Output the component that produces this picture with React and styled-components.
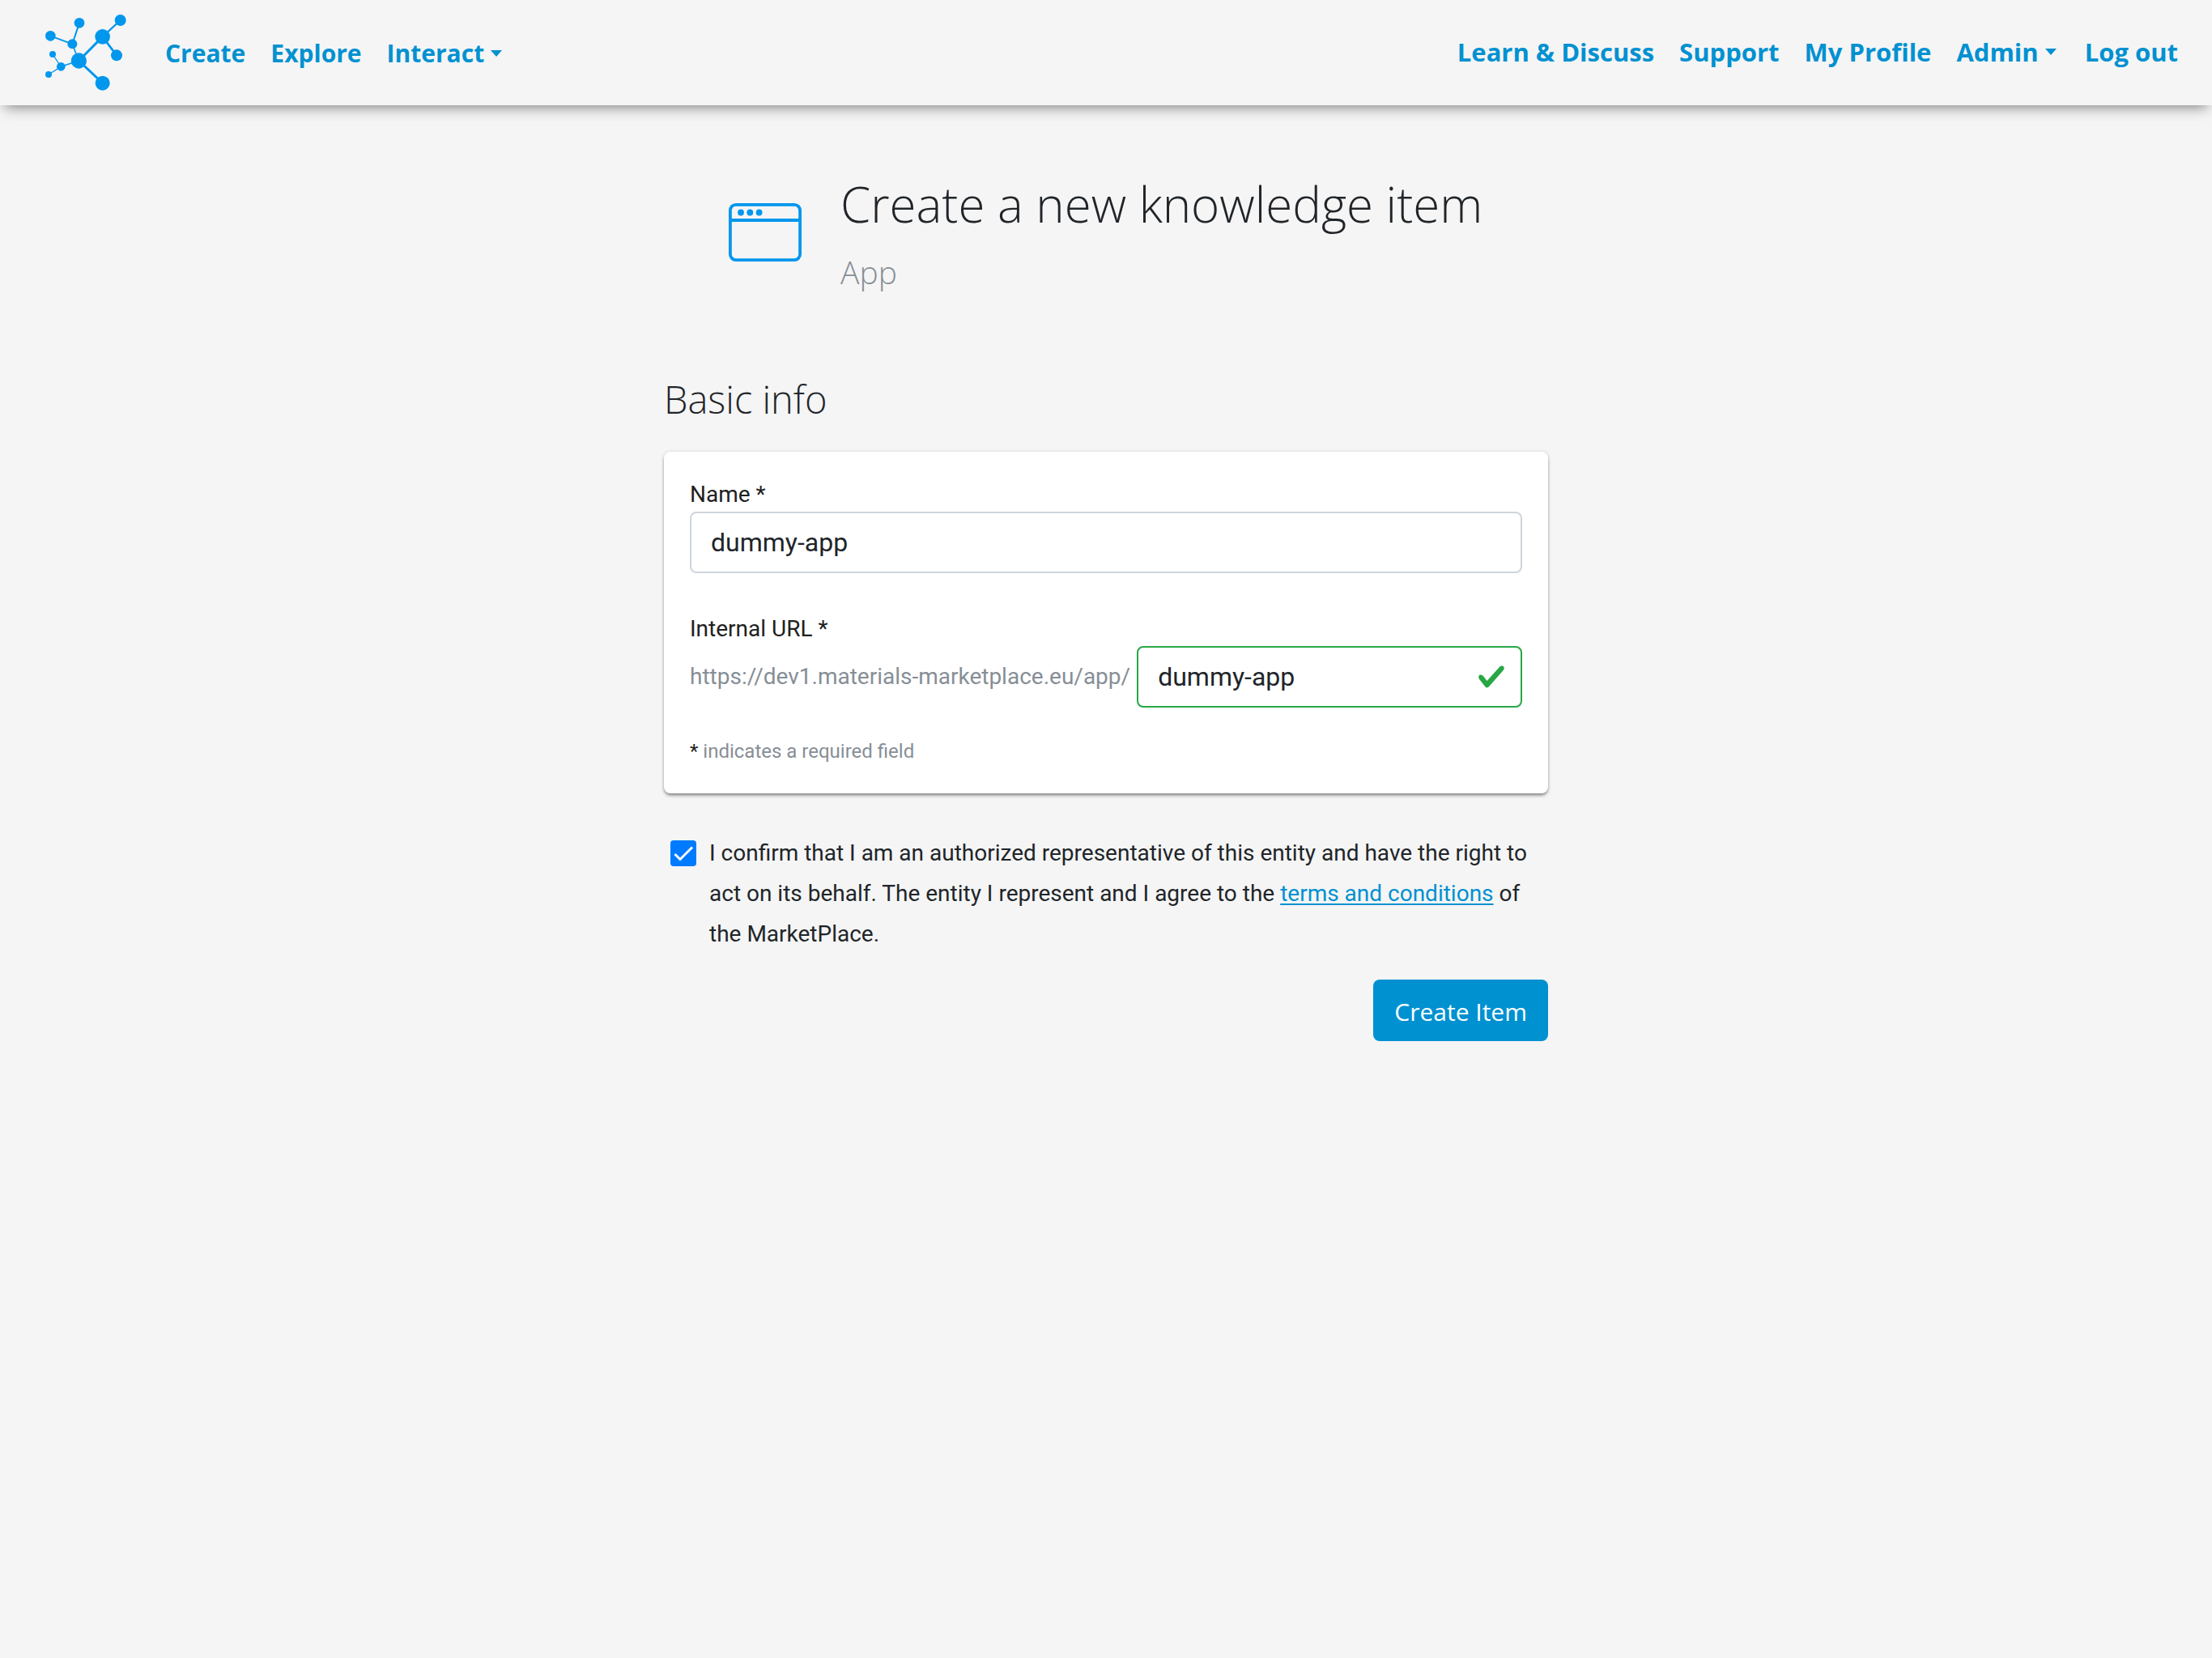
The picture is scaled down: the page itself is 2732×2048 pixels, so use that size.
import React from "react";
import styled, { createGlobalStyle } from "styled-components";

const BLUE = "#0091d1";
const ICON_BLUE = "#0097ed";
const TEXT = "#212529";
const MUTED = "#868e96";
const HEADING_FONT = '"Segoe UI", "Open Sans", "Noto Sans", sans-serif';

const GlobalStyle = createGlobalStyle`
  *, *::before, *::after { box-sizing: border-box; }
  body {
    margin: 0;
    background: #f5f5f5;
    color: ${TEXT};
    font-family: Roboto, "Liberation Sans", sans-serif;
    font-size: 28px;
    line-height: 50px;
  }
`;

const TopBar = styled.header`
  display: flex;
  align-items: center;
  height: 130px;
  padding: 0 42px 0 56px;
  background: #f5f5f5;
  box-shadow: 0 8px 16px -6px rgba(0, 0, 0, 0.5);
`;

const LogoLink = styled.a`
  display: flex;
  margin-right: 48px;
`;

const NavList = styled.nav`
  display: flex;
  gap: 31px;
  margin-left: ${(p) => (p.$end ? "auto" : "0")};
  padding: ${(p) => (p.$end ? "0 0 2px" : "2px 0 0")};
  font: 700 ${(p) => (p.$end ? "31px" : "30px")}/48px ${HEADING_FONT};
`;

const NavLink = styled.a`
  display: flex;
  align-items: center;
  gap: 8px;
  color: ${BLUE};
  text-decoration: none;
  white-space: nowrap;
`;

const Caret = styled.span`
  margin-right: 4px;
  border-top: 8px solid currentColor;
  border-left: 7px solid transparent;
  border-right: 7px solid transparent;
`;

const Page = styled.main`
  max-width: 1092px;
  margin: 0 auto;
  padding: 84px 0 64px;
`;

const PageHeading = styled.div`
  display: flex;
  align-items: center;
  gap: 48px;
  padding-left: 80px;
  margin-bottom: 104px;
`;

const HeadingText = styled.div`
  display: grid;
  gap: 22px;
`;

const Title = styled.h1`
  margin: 0;
  font: 300 60px/76px ${HEADING_FONT};
  white-space: nowrap;
`;

const Subtitle = styled.p`
  margin: 0;
  color: ${MUTED};
  font: 300 39px/48px ${HEADING_FONT};
`;

const SectionTitle = styled.h2`
  margin: 0 0 36px;
  font: 300 47px/58px ${HEADING_FONT};
`;

const Card = styled.section`
  padding: 32px;
  border-radius: 8px;
  background: #fff;
  box-shadow: 0 3px 4px -1px rgba(0, 0, 0, 0.5), 0 0 4px rgba(0, 0, 0, 0.12);
`;

const Field = styled.div`
  display: flex;
  flex-direction: column;
  margin-bottom: ${(p) => (p.$last ? "34px" : "48px")};
`;

const Label = styled.label`
  color: #212121;
  line-height: 42px;
`;

const UrlRow = styled.div`
  display: flex;
  align-items: center;
  gap: 8px;
`;

const UrlPrefix = styled.span`
  color: ${MUTED};
  white-space: nowrap;
`;

const InputBox = styled.div`
  display: grid;
  flex: 1;
  align-items: center;
`;

const TextInput = styled.input`
  grid-area: 1 / 1;
  width: 100%;
  min-width: 0;
  height: 76px;
  padding: 0 24px;
  border: 2px solid ${(p) => (p.$valid ? "#28a745" : "#ced4da")};
  border-radius: 8px;
  background: #fff;
  color: ${TEXT};
  font: 400 32px/48px Roboto, "Liberation Sans", sans-serif;
`;

const ValidMark = styled.svg`
  grid-area: 1 / 1;
  justify-self: end;
  margin-right: 20px;
  pointer-events: none;
`;

const Note = styled.p`
  margin: 0;
  color: ${MUTED};
  font-size: 24px;
  line-height: 40px;
`;

const Required = styled.span`
  color: #212121;
`;

const Consent = styled.div`
  display: flex;
  gap: 16px;
  margin: 49px 0 31px;
  padding-left: 8px;
`;

const TickBox = styled.span`
  display: grid;
  flex: none;
  place-items: center;
  width: 32px;
  height: 50px;
`;

const Tick = styled.input`
  grid-area: 1 / 1;
  appearance: none;
  width: 32px;
  height: 32px;
  margin: 0;
  border-radius: 4px;
  background: #007bff;
`;

const TickMark = styled.svg`
  grid-area: 1 / 1;
  pointer-events: none;
`;

const TermsLink = styled.a`
  color: ${BLUE};
  text-decoration: underline 2px;
  text-decoration-skip-ink: none;
  text-underline-offset: 3px;
`;

const Actions = styled.div`
  display: flex;
  justify-content: flex-end;
`;

const SubmitButton = styled.button`
  height: 76px;
  padding: 4px 26px 0;
  border: 0;
  border-radius: 8px;
  background: ${BLUE};
  color: #fff;
  font: 400 30px/48px ${HEADING_FONT};
`;

function Logo() {
  return (
    <svg width="100" height="94" viewBox="48 54 300 282" aria-hidden="true">
      <g stroke={ICON_BLUE} fill="none">
        <path strokeWidth="9" d="M172 225 260 136M172 225 260 308" />
        <path strokeWidth="8" d="M260 136 312 205" />
        <path strokeWidth="7" d="M260 136 326 75" />
        <path strokeWidth="6" d="M148 163 174 85M148 163 67 133" />
        <path strokeWidth="5" d="M172 225 148 163M172 225 106 247" />
        <path strokeWidth="4" d="M106 247 75 201M106 247 60 276" />
      </g>
      <g fill={ICON_BLUE}>
        <circle cx="326" cy="75" r="21" />
        <circle cx="260" cy="136" r="28" />
        <circle cx="312" cy="205" r="21" />
        <circle cx="172" cy="225" r="29" />
        <circle cx="260" cy="308" r="27" />
        <circle cx="148" cy="163" r="18" />
        <circle cx="174" cy="85" r="19" />
        <circle cx="67" cy="133" r="19" />
        <circle cx="75" cy="201" r="12" />
        <circle cx="106" cy="247" r="16" />
        <circle cx="60" cy="276" r="12" />
      </g>
    </svg>
  );
}

function AppIcon() {
  return (
    <svg width="90" height="72" viewBox="0 0 90 72" aria-hidden="true">
      <g fill="none" stroke={ICON_BLUE} strokeWidth="3.8">
        <rect x="1.9" y="1.9" width="86.2" height="68.2" rx="7" />
        <path d="M2 21H88" />
      </g>
      <g fill={ICON_BLUE}>
        <circle cx="15" cy="11.5" r="3.9" />
        <circle cx="26.3" cy="11.5" r="3.9" />
        <circle cx="37.6" cy="11.5" r="3.9" />
      </g>
    </svg>
  );
}

const mainLinks = [
  { label: "Create" },
  { label: "Explore" },
  { label: "Interact", menu: true },
];

const userLinks = [
  { label: "Learn & Discuss" },
  { label: "Support" },
  { label: "My Profile" },
  { label: "Admin", menu: true },
  { label: "Log out" },
];

function Nav({ links, end, name }) {
  return (
    <NavList $end={end} aria-label={name}>
      {links.map((link) => (
        <NavLink key={link.label} href="#">
          {link.label}
          {link.menu && <Caret />}
        </NavLink>
      ))}
    </NavList>
  );
}

export default function App() {
  return (
    <>
      <GlobalStyle />
      <TopBar>
        <LogoLink href="#" aria-label="Home">
          <Logo />
        </LogoLink>
        <Nav links={mainLinks} name="Main" />
        <Nav links={userLinks} name="Account" end />
      </TopBar>
      <Page>
        <PageHeading>
          <AppIcon />
          <HeadingText>
            <Title>Create a new knowledge item</Title>
            <Subtitle>App</Subtitle>
          </HeadingText>
        </PageHeading>
        <SectionTitle>Basic info</SectionTitle>
        <form onSubmit={(e) => e.preventDefault()}>
          <Card>
            <Field>
              <Label htmlFor="name">Name *</Label>
              <TextInput id="name" type="text" defaultValue="dummy-app" />
            </Field>
            <Field $last>
              <Label htmlFor="url">Internal URL *</Label>
              <UrlRow>
                <UrlPrefix>https://dev1.materials-marketplace.eu/app/</UrlPrefix>
                <InputBox>
                  <TextInput id="url" type="text" defaultValue="dummy-app" $valid />
                  <ValidMark width="36" height="36" viewBox="0 0 8 8" aria-hidden="true">
                    <path
                      fill="#28a745"
                      d="M2.3 6.73L.6 4.53c-.4-1.04.46-1.4 1.1-.8l1.1 1.4 3.4-3.8c.6-.63 1.6-.27 1.2.7l-4 4.6c-.43.5-.8.4-1.1.1z"
                    />
                  </ValidMark>
                </InputBox>
              </UrlRow>
            </Field>
            <Note>
              <Required>*</Required> indicates a required field
            </Note>
          </Card>
          <Consent>
            <TickBox>
              <Tick id="consent" type="checkbox" defaultChecked />
              <TickMark width="32" height="32" viewBox="0 0 32 32" aria-hidden="true">
                <path d="M5.5 17 12 23.5 27 8.5" fill="none" stroke="#fff" strokeWidth="3" />
              </TickMark>
            </TickBox>
            <label htmlFor="consent">
              I confirm that I am an authorized representative of this entity and have the right to
              act on its behalf. The entity I represent and I agree to the{" "}
              <TermsLink href="#">terms and conditions</TermsLink> of the MarketPlace.
            </label>
          </Consent>
          <Actions>
            <SubmitButton type="submit">Create Item</SubmitButton>
          </Actions>
        </form>
      </Page>
    </>
  );
}
